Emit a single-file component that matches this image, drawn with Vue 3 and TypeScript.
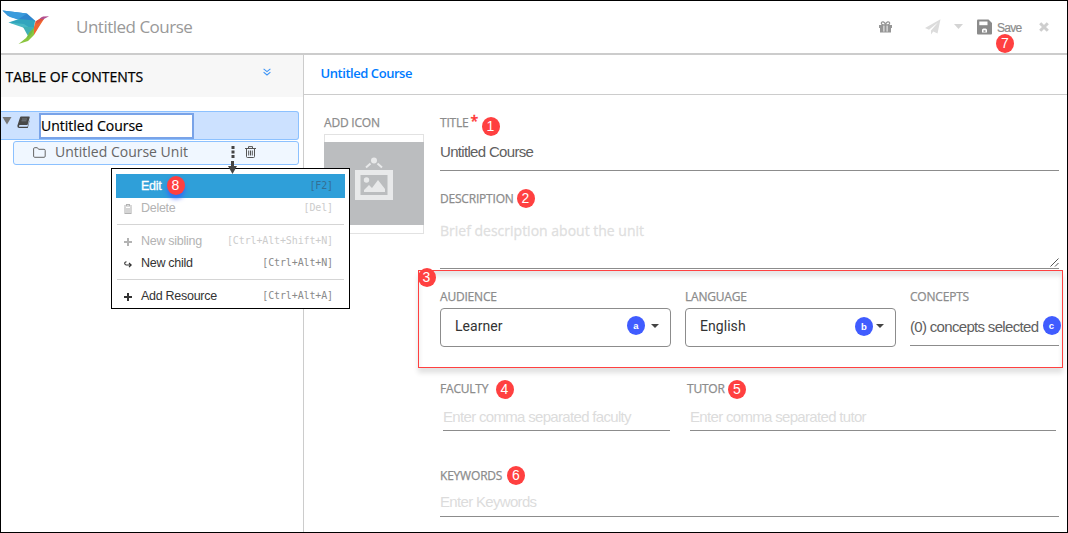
<script setup lang="ts">
interface MenuItem {
  label: string
  keys: string
  icon?: 'trash' | 'plus' | 'child'
  state?: 'active' | 'disabled'
  divider?: boolean
}

const menu: MenuItem[] = [
  { label: 'Edit', keys: '[F2]', state: 'active' },
  { label: 'Delete', keys: '[Del]', icon: 'trash', state: 'disabled' },
  { label: 'New sibling', keys: '[Ctrl+Alt+Shift+N]', icon: 'plus', state: 'disabled', divider: true },
  { label: 'New child', keys: '[Ctrl+Alt+N]', icon: 'child' },
  { label: 'Add Resource', keys: '[Ctrl+Alt+A]', icon: 'plus', divider: true },
]
</script>

<template>
  <div class="app">
    <header class="header">
      <svg class="logo" width="50" height="38" viewBox="0 0 50 38">
        <polygon points="1.500,2.500 26,5.500 34.500,13 30,17 18,11.500 7,8" fill="#2f86cd" />
        <polygon points="1.500,2.500 26,5.500 17,11.500 9,9" fill="#3a9bdc" />
        <polygon points="7.500,14.500 18,11 34,12.500 33,21 23,18" fill="#31a5bd" />
        <polygon points="7.500,14.500 23,16 32,22 22,19.500" fill="#48b8c4" />
        <polygon points="22,19 33,19 31,26 27,28" fill="#3fb0b4" />
        <polygon points="33,20 33,27 27,33 17.500,36 25,30 29,24" fill="#8bc53f" />
        <polygon points="33,20 31,25 26,31 28,25" fill="#6cb94a" />
        <polygon points="34.500,13.500 41,9.500 43,11 38.500,18 33,27 33,19" fill="#f0662f" />
        <polygon points="34.500,13.500 41,9.500 43,11 36,16" fill="#df5140" />
        <polygon points="38.500,10.500 42,8.500 48,8.300 42,11.500" fill="#b2508f" />
      </svg>
      <span class="course-name">Untitled Course</span>
      <div class="tools">
        <svg class="gift" width="13" height="12" viewBox="0 0 13 12">
          <path d="M0 4h13v3H0zM1 7h11v4.6H1z" fill="#969696" />
          <path d="M6.400 4C4 4 2 3.600 2.400 2C2.900 0 5.600 .6 6.500 3.600C7.400 .6 10.100 0 10.600 2C11 3.600 9 4 6.600 4" fill="none" stroke="#969696" stroke-width="1.300" />
          <path d="M4.900 4.600v6M8.100 4.600v6" stroke="#fff" stroke-width=".9" />
        </svg>
        <svg class="plane" width="16" height="16" viewBox="0 0 16 16">
          <path d="M15.500 .3L0 9l4 1.800L13 3.500L6 11.500v4l2.300-2.900L12.500 14.500z" fill="#dcdcdc" />
        </svg>
        <svg class="drop" width="9" height="5" viewBox="0 0 9 5"><path d="M0 0h9L4.500 5z" fill="#d4d4d4" /></svg>
        <svg class="floppy" width="15" height="16" viewBox="0 0 15 16">
          <path d="M1 .5h10.500L15 4v10.500q0 1-1 1H1q-1 0-1-1v-13q0-1 1-1z" fill="#8b8b8b" />
          <path d="M2.300 2.500h8.200v3.700H2.300z" fill="#fff" />
          <path d="M5 13.500v-2.500q0-1.500 1.500-1.500h2q1.500 0 1.500 1.500v2.500z" fill="#fff" />
          <path d="M6.500 11.300h2v1.500h-2z" fill="#8b8b8b" />
        </svg>
        <span class="save">Save</span>
        <svg class="close" width="10" height="10" viewBox="0 0 10 10"><path d="M1.200 1.200l7.600 7.600M8.800 1.200L1.200 8.800" stroke="#cecece" stroke-width="3" /></svg>
      </div>
    </header>

    <div class="body">
      <aside class="sidebar">
        <div class="toc">
          <span>TABLE OF CONTENTS</span>
          <svg width="8" height="8" viewBox="0 0 8 8"><path d="M.6 .8L4 3.600L7.400 .8M.6 4.200L4 7L7.400 4.200" fill="none" stroke="#3d94f6" stroke-width="1.100" /></svg>
        </div>
        <div class="tree">
          <div class="root-row">
            <svg class="twisty" width="10" height="8" viewBox="0 0 10 8"><path d="M.5 0h9L5 7.500z" fill="#777" /></svg>
            <svg class="book" width="13" height="13" viewBox="0 0 13 13">
              <path d="M4 .5h8q1 0 .7 1L10.500 9H3Q1.500 9.200 2 10.700h8.500L12.500 4v1L10.800 12H2Q0 11.500.4 9.500L3 1.500Q3.300.5 4 .5z" fill="#484848" />
              <path d="M5 3h5M4.500 4.800h5" stroke="#8a929c" stroke-width=".7" />
            </svg>
            <span class="rename">Untitled Course</span>
          </div>
          <div class="unit-row">
            <svg class="folder" width="13" height="11" viewBox="0 0 13 11"><path d="M.6 9.200V1.800Q.6.700 1.700.700H4.400L5.600 2.300H11Q12.200 2.300 12.200 3.400V9.200Q12.200 10.300 11 10.300H1.700Q.6 10.300.6 9.200z" fill="none" stroke="#666" /></svg>
            <span class="unit-name">Untitled Course Unit</span>
            <svg class="dots" width="4" height="12" viewBox="0 0 4 12"><path d="M.5 0h3v3h-3zM.5 4.500h3v3h-3zM.5 9h3v3h-3z" fill="#444" /></svg>
            <svg class="bin" width="11" height="12" viewBox="0 0 11 12"><path d="M0 2.500h11M3.500 2.500V.6h4v1.900M1.500 2.500v8q0 1 1 1h6q1 0 1-1v-8M3.700 4.500v5M5.500 4.500v5M7.300 4.500v5" fill="none" stroke="#555" /></svg>
          </div>
        </div>
      </aside>

      <main class="main">
        <div class="crumb">Untitled Course</div>
        <div class="editor">
          <section class="icon-col">
            <div class="label">ADD ICON</div>
            <div class="thumb">
              <div class="thumb-fill">
                <svg width="40" height="44" viewBox="0 0 40 44">
                  <circle cx="20" cy="3.500" r="3" fill="#e8e9ea" />
                  <path d="M16.500 6.500L12 10.500M23.500 6.500L28 10.500" stroke="#e8e9ea" stroke-width="2" />
                  <path fill-rule="evenodd" d="M1 13h38v30H1zM6.500 18v20h27V18z" fill="#e8e9ea" />
                  <circle cx="12.500" cy="23" r="2.700" fill="#e8e9ea" />
                  <path d="M10 35v-2l5-5l3 3l6-8l7 9v3z" fill="#e8e9ea" />
                </svg>
              </div>
            </div>
          </section>

          <section class="fields">
            <div class="label title-label">TITLE<span class="star">*</span></div>
            <div class="input title-input">Untitled Course</div>
            <div class="label desc-label">DESCRIPTION</div>
            <div class="textarea">
              <span>Brief description about the unit</span>
              <svg width="9" height="9" viewBox="0 0 9 9"><path d="M.5 8.500l8-8M5 8.500L8.500 5" stroke="#555" /></svg>
            </div>
            <div class="trio">
              <div class="audience">
                <div class="label">AUDIENCE</div>
                <div class="select"><span>Learner</span><svg width="8" height="4" viewBox="0 0 8 4"><path d="M0 0h8L4 4z" fill="#444" /></svg></div>
              </div>
              <div class="language">
                <div class="label">LANGUAGE</div>
                <div class="select"><span>English</span><svg width="8" height="4" viewBox="0 0 8 4"><path d="M0 0h8L4 4z" fill="#444" /></svg></div>
              </div>
              <div class="concepts">
                <div class="label">CONCEPTS</div>
                <div class="input concept-input">(0) concepts selected</div>
              </div>
            </div>
            <div class="duo">
              <div class="faculty">
                <div class="label">FACULTY</div>
                <div class="input hint">Enter comma separated faculty</div>
              </div>
              <div class="tutor">
                <div class="label">TUTOR</div>
                <div class="input hint">Enter comma separated tutor</div>
              </div>
            </div>
            <div class="label key-label">KEYWORDS</div>
            <div class="input hint key-input">Enter Keywords</div>
          </section>
        </div>
      </main>
    </div>

    <div class="group-outline"></div>

    <div class="context-menu">
      <template v-for="item in menu" :key="item.label">
        <div v-if="item.divider" class="divider"></div>
        <div class="menu-item" :class="item.state">
          <span class="menu-icon">
            <svg v-if="item.icon === 'trash'" width="8" height="10" viewBox="0 0 8 10"><path d="M0 2h8M2.500 1.500V.5h3v1M1 3v6.500h6V3M3 4v5M5 4v5" fill="none" stroke="currentColor" stroke-width="1.100" /></svg>
            <svg v-else-if="item.icon === 'plus'" width="8" height="8" viewBox="0 0 8 8"><path d="M0 4h8M4 0v8" stroke="currentColor" stroke-width="2" /></svg>
            <svg v-else-if="item.icon === 'child'" width="8" height="7" viewBox="0 0 8 7"><path d="M2.500 .8Q.5.900.7 2.500T2.500 4H7M5 2l2.200 2L5 6.200" fill="none" stroke="currentColor" stroke-width="1.100" /></svg>
          </span>
          <span class="menu-label">{{ item.label }}</span>
          <span class="menu-keys">{{ item.keys }}</span>
        </div>
      </template>
    </div>
    <svg class="arrow" width="9" height="14" viewBox="0 0 9 14"><path d="M3 0h3v5h3L4.500 13L0 5h3z" fill="#444" /></svg>

    <span class="badge b1">1</span>
    <span class="badge b2">2</span>
    <span class="badge b3">3</span>
    <span class="badge b4">4</span>
    <span class="badge b5">5</span>
    <span class="badge b6">6</span>
    <span class="badge b7">7</span>
    <span class="badge b8">8</span>
    <span class="badge blue ba">a</span>
    <span class="badge blue bb">b</span>
    <span class="badge blue bc">c</span>
  </div>
</template>

<style>
body { margin: 0; background: #fff; }
</style>

<style scoped>
.app {
  position: relative;
  box-sizing: border-box;
  width: 1068px;
  height: 533px;
  border: 1px solid #000;
  background: #fff;
  overflow: hidden;
  display: flex;
  flex-direction: column;
  font-family: "Open Sans", sans-serif;
  white-space: nowrap;
}
svg { display: block; flex: none; }
.header {
  box-sizing: border-box;
  height: 54px;
  border-bottom: 2px solid #ccc;
  display: flex;
  align-items: flex-start;
  flex: none;
}
.logo { margin-top: 6.5px; }
.course-name { margin: 14px 0 0 25px; font-size: 17px; line-height: 24px; letter-spacing: -.5px; color: #999; }
.tools { margin-left: auto; display: flex; align-items: flex-start; padding-right: 18px; }
.gift { margin-top: 20px; }
.plane { margin: 18px 0 0 33px; }
.drop { margin: 23px 0 0 13px; }
.floppy { margin: 18px 0 0 14px; }
.save { width: 25px; margin: 19px 0 0 5px; font: 12px/16px "Liberation Sans", Arial, sans-serif; letter-spacing: -.7px; color: #8c8c8c; -webkit-text-stroke: .2px #8c8c8c; }
.close { margin: 21px 0 0 17px; }
.body { display: flex; flex: 1; min-height: 0; }
.sidebar { box-sizing: border-box; width: 303px; border-right: 1px solid #ccc; flex: none; }
.toc {
  box-sizing: border-box;
  height: 42px;
  padding: 0 32px 0 4.5px;
  background: #f7f7f7;
  display: flex;
  justify-content: space-between;
  font-size: 14px;
  line-height: 44px;
  color: #000;
  -webkit-text-stroke: .25px #000;
}
.toc svg { margin-top: 13px; }
.tree { padding-top: 14px; }
.root-row {
  box-sizing: border-box;
  width: 298px;
  height: 29px;
  border: 1px solid #8cc1ff;
  border-left: 0;
  border-radius: 0 3px 3px 0;
  background: #cce1ff;
  display: flex;
}
.twisty { margin: 5px 0 0 1px; }
.book { margin: 4px 0 0 5px; }
.rename {
  box-sizing: border-box;
  width: 155px;
  height: 26px;
  margin: 1px 0 0 9px;
  border: 2px solid #79a3e8;
  background: #fff;
  font-size: 14px;
  line-height: 22px;
  color: #000;
  -webkit-text-stroke: .2px #000;
}
.unit-row {
  box-sizing: border-box;
  width: 286px;
  height: 24px;
  margin: 1px 0 0 12px;
  border: 1px solid #8cc1ff;
  border-radius: 3px;
  background: #f0f7ff;
  display: flex;
}
.folder { margin: 5px 0 0 19px; }
.unit-name { width: 134px; margin-left: 9px; font-size: 14px; line-height: 20px; color: #666; }
.dots { margin: 4px 0 0 42px; }
.bin { margin: 4px 0 0 10px; }
.main { flex: 1; min-width: 0; }
.crumb { box-sizing: border-box; height: 40px; border-bottom: 1px solid #ccc; padding-left: 16.5px; font-size: 13px; font-weight: 600; line-height: 37px; letter-spacing: -.45px; color: #007bff; }
.editor { display: flex; padding: 20px 8px 0 20px; gap: 16px; }
.icon-col { width: 100px; }
.label { font-size: 12px; line-height: 16px; height: 16px; color: #8c8c8c; letter-spacing: -.2px; -webkit-text-stroke: .25px #8c8c8c; }
.thumb { box-sizing: border-box; height: 100px; margin-top: 3px; padding: 7px 0; border: 1px solid #e2e2e2; }
.thumb-fill { height: 83px; margin: 0 -1px; background: #bbbdbf; display: flex; justify-content: center; padding-top: 15px; box-sizing: border-box; }
.fields { width: 619px; }
.title-label { display: flex; }
.star { margin: -3px 0 0 2px; font-size: 14px; line-height: 17px; color: #f33; -webkit-text-stroke: .5px #f33; }
.input { box-sizing: border-box; border-bottom: 1px solid #8c8c8c; font: 15px/20px "Liberation Sans", Arial, sans-serif; letter-spacing: -.68px; color: #606060; }
.title-input { height: 40px; padding-top: 11px; }
.desc-label { margin-top: 20px; }
.textarea { box-sizing: border-box; height: 62px; border-bottom: 1px solid #8c8c8c; padding-top: 13px; display: flex; justify-content: space-between; font-size: 14px; line-height: 22px; color: #dfdfdf; -webkit-text-stroke: .3px #dfdfdf; }
.textarea svg { align-self: flex-end; margin-bottom: 1px; }
.trio { display: flex; gap: 14px; margin-top: 20px; }
.audience { width: 231px; }
.language { width: 211px; }
.concepts { flex: 1; }
.select { box-sizing: border-box; height: 39px; margin-top: 3px; border: 1px solid #8c8c8c; border-radius: 4px; padding: 0 11px 3px 14px; display: flex; align-items: center; justify-content: space-between; font: 14px/20px Roboto, sans-serif; letter-spacing: .05px; color: #333; }
.concept-input { height: 41px; padding-top: 12px; }
.duo { display: flex; gap: 17px; margin-top: 34px; }
.faculty { width: 230px; }
.tutor { width: 369px; }
.duo .input { margin-left: 3px; height: 34px; padding-top: 10px; }
.hint { color: #dcdcdc; }
.key-label { margin-top: 37px; }
.key-input { height: 33px; padding-top: 8px; }
.group-outline { position: absolute; box-sizing: border-box; left: 417px; top: 269px; width: 645px; height: 98px; border: 1px solid #ff4040; box-shadow: 0 5px 5px rgba(0, 0, 0, .12), inset 0 5px 5px rgba(0, 0, 0, .1); }
.context-menu { position: absolute; box-sizing: border-box; left: 110px; top: 167px; width: 239px; height: 141px; border: 1px solid #000; background: #fff; padding: 5px 4px 0; }
.menu-item { display: flex; align-items: center; height: 22px; padding: 0 12px 0 7px; color: #333; }
.menu-item.active { height: 24px; margin-bottom: -1px; padding-bottom: 1px; box-sizing: border-box; background: #2f9fd9; color: #fff; }
.menu-item.disabled { color: #b3b3b3; }
.menu-icon { width: 18px; padding: 2px 0 0 1px; box-sizing: border-box; }
.menu-label { font: 12.5px/20px "Liberation Sans", Arial, sans-serif; letter-spacing: -.28px; }
.menu-keys { margin-left: auto; font: 10px/20px "DejaVu Sans Mono", monospace; letter-spacing: -.13px; color: #8a8a8a; }
.active .menu-label { -webkit-text-stroke: .3px #fff; }
.active .menu-keys { color: #346f94; }
.disabled .menu-keys { color: #ccc; }
.divider { height: 1px; margin: 5px 1px; background: #d5d5d5; }
.arrow { position: absolute; left: 227px; top: 160px; }
.badge { position: absolute; width: 18px; height: 19px; border-radius: 50%; background: #ff4040; color: #fff; font: 14px/19px "Liberation Sans", Arial, sans-serif; text-align: center; }
.blue { background: #405cff; font: 600 9.500px/20px "Liberation Sans", Arial, sans-serif; }
.b1 { left: 480.5px; top: 115.5px; }
.b2 { left: 515.5px; top: 187.5px; }
.b3 { left: 416.500px; top: 266.5px; }
.b4 { left: 494.500px; top: 378.5px; }
.b5 { left: 727px; top: 378.5px; }
.b6 { left: 506px; top: 464.5px; }
.b7 { left: 995px; top: 33px; }
.b8 { left: 165.5px; top: 174.5px; box-shadow: 0 4px 4px rgba(50, 90, 255, .7); }
.ba { left: 626px; top: 314.5px; }
.bb { left: 854px; top: 315.5px; }
.bc { left: 1041.5px; top: 314.5px; }
</style>
